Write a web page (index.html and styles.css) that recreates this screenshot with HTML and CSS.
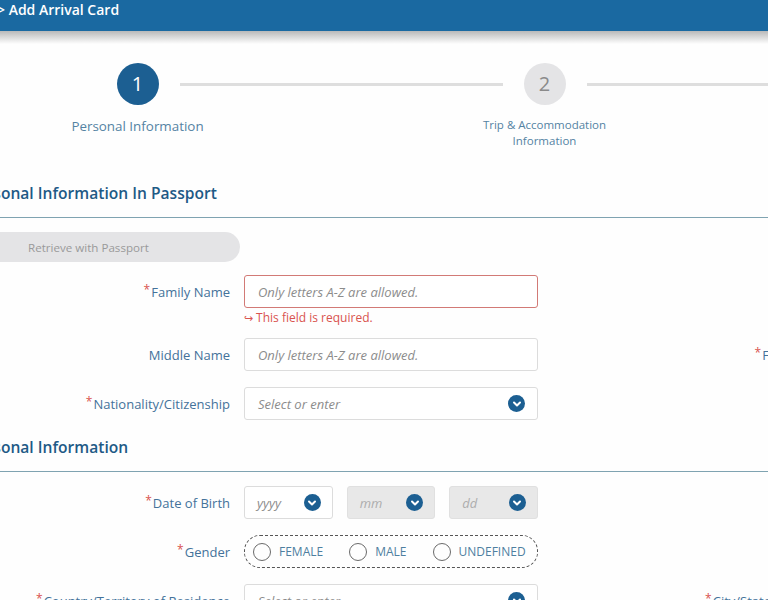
FILE: index.html
```html
<!DOCTYPE html>
<html lang="en">
<head>
<meta charset="utf-8">
<title>Add Arrival Card</title>
<link rel="stylesheet" href="styles.css">
</head>
<body>
<header class="topbar"><span class="crumb">&gt; Add Arrival Card</span></header>
<div class="topbar-shadow"></div>
<main class="page">
  <ol class="stepper">
    <li class="step active">
      <div class="track"><span class="line hidden"></span><span class="dot">1</span><span class="line"></span></div>
      <div class="step-label">Personal Information</div>
    </li>
    <li class="step">
      <div class="track"><span class="line"></span><span class="dot">2</span><span class="line"></span></div>
      <div class="step-label small">Trip &amp; Accommodation Information</div>
    </li>
    <li class="step">
      <div class="track"><span class="line"></span><span class="dot">3</span><span class="line hidden"></span></div>
      <div class="step-label small">Health Declaration</div>
    </li>
  </ol>

  <h2 class="section-title first">Personal Information In Passport</h2>
  <button class="retrieve" type="button">Retrieve with Passport</button>

  <div class="form-grid">
    <label class="lbl"><span class="req">*</span>Family Name</label>
    <div class="field">
      <div class="input error"><span class="ph">Only letters A-Z are allowed.</span></div>
      <div class="err-msg"><span class="err-arrow">↪</span> This field is required.</div>
    </div>
    <div class="lbl right"></div>
    <div class="field"></div>

    <label class="lbl">Middle Name</label>
    <div class="field"><div class="input"><span class="ph">Only letters A-Z are allowed.</span></div></div>
    <label class="lbl right"><span class="req">*</span>First Name</label>
    <div class="field"><div class="input"><span class="ph">Only letters A-Z are allowed.</span></div></div>

    <label class="lbl"><span class="req">*</span>Nationality/Citizenship</label>
    <div class="field"><div class="input select"><span class="ph">Select or enter</span><span class="chev"><svg viewBox="0 0 16 16" width="16" height="16"><path d="M5 6.5 L8 9.5 L11 6.5" fill="none" stroke="#fff" stroke-width="2" stroke-linecap="round" stroke-linejoin="round"/></svg></span></div></div>
    <div class="lbl right"></div>
    <div class="field"></div>
  </div>

  <h2 class="section-title second">Personal Information</h2>

  <div class="form-grid">
    <label class="lbl"><span class="req">*</span>Date of Birth</label>
    <div class="field date-row">
      <div class="input select"><span class="ph">yyyy</span><span class="chev"><svg viewBox="0 0 16 16" width="16" height="16"><path d="M5 6.5 L8 9.5 L11 6.5" fill="none" stroke="#fff" stroke-width="2" stroke-linecap="round" stroke-linejoin="round"/></svg></span></div>
      <div class="input select disabled"><span class="ph">mm</span><span class="chev"><svg viewBox="0 0 16 16" width="16" height="16"><path d="M5 6.5 L8 9.5 L11 6.5" fill="none" stroke="#fff" stroke-width="2" stroke-linecap="round" stroke-linejoin="round"/></svg></span></div>
      <div class="input select disabled"><span class="ph">dd</span><span class="chev"><svg viewBox="0 0 16 16" width="16" height="16"><path d="M5 6.5 L8 9.5 L11 6.5" fill="none" stroke="#fff" stroke-width="2" stroke-linecap="round" stroke-linejoin="round"/></svg></span></div>
    </div>
    <div class="lbl right"></div>
    <div class="field"></div>

    <label class="lbl"><span class="req">*</span>Gender</label>
    <div class="field">
      <div class="radio-group">
        <span class="radio"><span class="circle"></span>FEMALE</span>
        <span class="radio"><span class="circle"></span>MALE</span>
        <span class="radio"><span class="circle"></span>UNDEFINED</span>
      </div>
    </div>
    <div class="lbl right"></div>
    <div class="field"></div>

    <label class="lbl"><span class="req">*</span>Country/Territory of Residence</label>
    <div class="field"><div class="input select"><span class="ph">Select or enter</span><span class="chev"><svg viewBox="0 0 16 16" width="16" height="16"><path d="M5 6.5 L8 9.5 L11 6.5" fill="none" stroke="#fff" stroke-width="2" stroke-linecap="round" stroke-linejoin="round"/></svg></span></div></div>
    <label class="lbl right"><span class="req">*</span>City/State/Province</label>
    <div class="field"><div class="input select"><span class="ph">Select or enter</span></div></div>
  </div>
</main>
</body>
</html>
```
FILE: styles.css
```css
html, body {
  margin: 0;
  padding: 0;
  background: #fefefe;
}
body {
  width: 768px;
  height: 600px;
  overflow: hidden;
  font-family: "Open Sans", "Liberation Sans", sans-serif;
  color: #44729a;
}

.topbar {
  height: 31px;
  background: #1a69a1;
  color: #fff;
  font-size: 14px;
  font-weight: 600;
  line-height: 20px;
  white-space: nowrap;
}
.crumb {
  display: block;
  margin-left: -3px;
}
.topbar-shadow {
  height: 13px;
  background: linear-gradient(#b9b9b9, #fefefe);
}

.page {
  width: 1200px;
}

/* stepper */
.stepper {
  list-style: none;
  margin: 0 0 0 -66px;
  padding: 19px 0 0;
  display: flex;
}
.step {
  width: 407px;
  flex: none;
  display: flex;
  flex-direction: column;
  align-items: center;
}
.track {
  width: 100%;
  display: flex;
  align-items: center;
}
.line {
  flex: 1;
  height: 3px;
  background: #dedede;
}
.line.hidden {
  visibility: hidden;
}
.dot {
  width: 42px;
  height: 42px;
  margin: 0 21px;
  border-radius: 50%;
  background: #e4e4e6;
  color: #8a8a8a;
  font-size: 20px;
  line-height: 42px;
  text-align: center;
}
.step.active .dot {
  background: #1c5f92;
  color: #fff;
}
.step-label {
  margin-top: 11px;
  font-size: 13.4px;
  line-height: 20px;
  color: #5483a3;
  text-align: center;
}
.step-label.small {
  margin-top: 12px;
  font-size: 11.5px;
  line-height: 16px;
  max-width: 130px;
}

/* sections */
.section-title {
  margin: 32px 0 0 -32px;
  padding-bottom: 12px;
  font-size: 15.6px;
  line-height: 24px;
  font-weight: 600;
  color: #1e5a86;
  border-bottom: 1px solid #7fa3b1;
}
.section-title.second {
  margin-top: 15px;
}

.retrieve {
  display: block;
  margin: 14px 0 0 -40px;
  width: 280px;
  height: 30px;
  padding: 0 0 0 68px;
  border: 0;
  border-radius: 15px;
  background: #e4e4e6;
  color: #9a9a9a;
  font-family: inherit;
  font-size: 11.6px;
  text-align: left;
}

/* form grid */
.form-grid {
  display: grid;
  grid-template-columns: 230px 294px 276px 294px;
  column-gap: 14px;
  row-gap: 16px;
  margin-top: 13px;
}
.section-title.second + .form-grid {
  margin-top: 14px;
}
.lbl {
  height: 33px;
  display: flex;
  align-items: center;
  justify-content: flex-end;
  font-size: 13px;
  color: #44729a;
  white-space: nowrap;
}
.req {
  color: #d9534f;
  font-size: 12px;
  align-self: flex-start;
  margin-top: 6px;
  margin-right: 1px;
}
.input {
  box-sizing: border-box;
  height: 33px;
  border: 1px solid #dcdcdc;
  border-radius: 3px;
  background: #fff;
  display: flex;
  align-items: center;
  padding: 0 12px 0 13px;
}
.input.error {
  border-color: #d27a76;
}
.ph {
  flex: 1;
  font-size: 13px;
  font-style: italic;
  color: #8c8c8c;
  white-space: nowrap;
}
.err-msg {
  margin: 3px 0 -3px;
  font-size: 12px;
  line-height: 14px;
  color: #d9534f;
}
.err-arrow {
  font-size: 11px;
}
.chev {
  width: 17px;
  height: 17px;
  border-radius: 50%;
  background: #1c5f92;
  display: flex;
  align-items: center;
  justify-content: center;
}
.date-row {
  display: grid;
  grid-template-columns: repeat(3, 1fr);
  column-gap: 14px;
}
.date-row .input {
  padding: 0 11px 0 12px;
}
.input.disabled {
  background: #e8e8e8;
  border-color: #e0e0e0;
}
.input.disabled .ph {
  color: #adadad;
}

.radio-group {
  box-sizing: border-box;
  height: 33px;
  border: 1px dashed #555;
  border-radius: 16px;
  display: flex;
  align-items: center;
  padding-left: 8px;
  gap: 26px;
}
.radio {
  display: flex;
  align-items: center;
  gap: 8px;
  font-size: 12px;
  color: #4e7fa0;
}
.circle {
  box-sizing: border-box;
  width: 18px;
  height: 18px;
  border: 1.5px solid #6a6a6a;
  border-radius: 50%;
}
```
